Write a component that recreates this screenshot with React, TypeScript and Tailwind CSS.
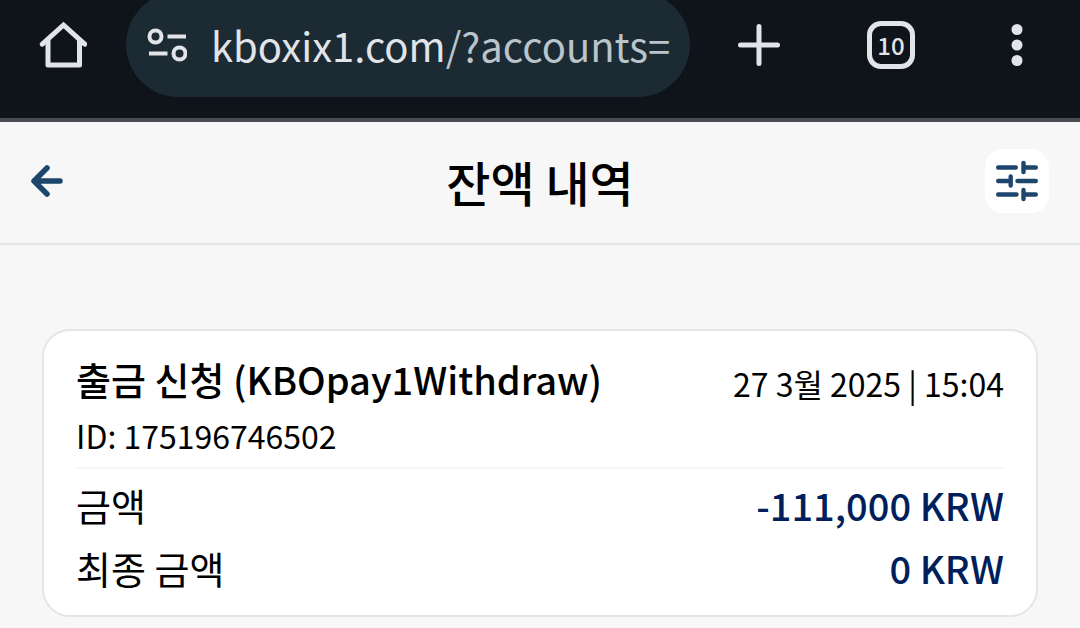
const HomeIcon = () => (
    <svg viewBox="0 0 48 48" className="size-12" fill="none" stroke="currentColor" strokeWidth="5" strokeLinecap="round" strokeLinejoin="round">
        <path d="M3.3 23.2 24.5 4 45.7 23.2" strokeLinejoin="miter" />
        <path d="M9 20V44H40.5V20" />
    </svg>
)

const SiteInfoIcon = () => (
    <svg viewBox="0 0 40 34" className="h-[34px] w-10 shrink-0" fill="none" stroke="currentColor" strokeWidth="4">
        <circle cx="8.5" cy="8.5" r="6" />
        <path d="M20.5 8.5H39M2 25.5h18.5" />
        <circle cx="32.5" cy="25.5" r="6" />
    </svg>
)

const PlusIcon = () => (
    <svg viewBox="0 0 42 42" className="size-[42px]" stroke="currentColor" strokeWidth="5" strokeLinecap="round">
        <path d="M2.5 21h37M21 2.5v37" />
    </svg>
)

const DotsIcon = () => (
    <svg viewBox="0 0 12 44" className="h-11 w-3" fill="currentColor">
        <circle cx="6" cy="6.5" r="5.5" />
        <circle cx="6" cy="22" r="5.5" />
        <circle cx="6" cy="37.5" r="5.5" />
    </svg>
)

const BackIcon = () => (
    <svg viewBox="0 0 32 32" className="size-8" fill="none" stroke="currentColor" strokeWidth="5.5" strokeLinecap="round" strokeLinejoin="round">
        <path d="M16 3 3 16l13 13M4 16h25" />
    </svg>
)

const FilterIcon = () => (
    <svg viewBox="0 0 42 42" className="size-[42px]" stroke="currentColor" strokeWidth="4.4" strokeLinecap="round">
        <path d="M2.2 7.5h17.6M27.5 3v9M27.5 7.5h12.3" />
        <path d="M2.2 21h12.5M14.7 16.5v9M21.5 21h18.3" />
        <path d="M2.2 34.5h18.3M27.5 30v9M27.5 34.5h12.3" />
    </svg>
)

const rows = [
    { label: "금액", value: "-111,000 KRW" },
    { label: "최종 금액", value: "0 KRW" },
]

const BrowserBar = () => (
    <div className="flex h-[122px] items-start overflow-hidden border-b-4 border-[#484c52] bg-[#0f141b] pr-[57px] pl-[39px] text-[#e1e4e8]">
        <button aria-label="Home" className="mt-[21px]">
            <HomeIcon />
        </button>
        {/* the address pill runs past the top edge of the bar */}
        <div className="-mt-2 ml-[39px] flex h-[105px] min-w-0 flex-1 items-center rounded-full bg-[#1c2a33] pr-4 pl-[21px]">
            <SiteInfoIcon />
            <a href="#" className="ml-6 overflow-hidden text-[40px] leading-[56px] whitespace-nowrap">
                kboxix1.com<span className="text-[#b9c4cb]">/?accounts=</span>
            </a>
        </div>
        <button aria-label="New tab" className="mt-6 ml-12">
            <PlusIcon />
        </button>
        <button aria-label="Tabs" className="mt-[21px] ml-[87px] flex size-12 items-center justify-center rounded-[14px] border-5 border-current text-2xl font-medium">
            10
        </button>
        <button aria-label="Menu" className="mt-[23px] ml-24">
            <DotsIcon />
        </button>
    </div>
)

const TransactionCard = () => (
    <article className="mx-[42px] mt-[84px] rounded-[28px] border-2 border-[#e3e5e8] bg-white px-8 pt-[18px] pb-4">
        <div className="flex items-center justify-between">
            <h2 className="text-[38px] leading-[60px] font-medium">출금 신청 (KBOpay1Withdraw)</h2>
            <time dateTime="2025-03-27T15:04" className="pt-2 text-[32px] leading-[52px]">27 3월 2025 | 15:04</time>
        </div>
        <p className="pb-[6px] text-[32px] leading-[52px]">ID: 175196746502</p>
        <dl className="border-t-2 border-[#f7f7f8] pt-1">
            {rows.map((row) => (
                <div key={row.label} className="flex items-center justify-between text-[38px] leading-[63px]">
                    <dt>{row.label}</dt>
                    <dd className="font-medium text-[#001f5c]">{row.value}</dd>
                </div>
            ))}
        </dl>
    </article>
)

const App = () => {
    return (
        <div className="min-h-screen bg-[#f7f7f7] font-['Noto_Sans_CJK_KR',sans-serif] text-black">
            <BrowserBar />
            <header className="flex h-[123px] items-center justify-between border-b-2 border-[#e4e5e6] px-[31px] pb-1">
                <button aria-label="뒤로" className="flex w-16 text-[#1c466b]">
                    <BackIcon />
                </button>
                <h1 className="text-[48px] leading-[72px] font-medium">잔액 내역</h1>
                <button aria-label="필터" className="flex size-16 items-center justify-center rounded-[18px] bg-white text-[#1c466b]">
                    <FilterIcon />
                </button>
            </header>
            <main>
                <TransactionCard />
            </main>
        </div>
    )
}

export default App
